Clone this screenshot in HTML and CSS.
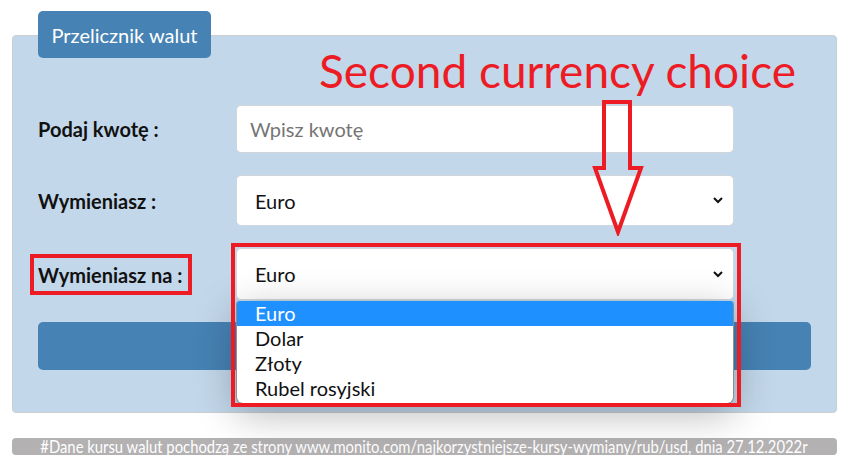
FILE: index.html
```html
<!DOCTYPE html>
<html lang="pl">
<head>
<meta charset="utf-8">
<title>Przelicznik walut</title>
<link rel="stylesheet" href="styles.css">
</head>
<body>
<div class="page">
  <div class="tab">Przelicznik walut</div>
  <div class="card">
    <div class="annotation">Second currency choice</div>
    <svg class="arrow" width="54" height="136" viewBox="0 0 54 136">
      <path d="M13 2 H39 V68 H50 L27 132 L4 68 H13 Z" fill="none" stroke="#ed1c24" stroke-width="4" stroke-linejoin="miter"/>
    </svg>
    <div class="row">
      <div class="label">Podaj kwotę :</div>
      <div class="field input"><span class="placeholder">Wpisz kwotę</span></div>
    </div>
    <div class="row">
      <div class="label">Wymieniasz :</div>
      <div class="field select"><span>Euro</span><svg class="chev" width="10" height="7" viewBox="0 0 10 7"><path d="M1 1 L5 5 L9 1" fill="none" stroke="#111" stroke-width="2"/></svg></div>
    </div>
    <div class="row">
      <div class="label"><span class="mark-label">Wymieniasz na :</span></div>
      <div class="field select select2">
        <span>Euro</span><svg class="chev" width="10" height="7" viewBox="0 0 10 7"><path d="M1 1 L5 5 L9 1" fill="none" stroke="#111" stroke-width="2"/></svg>
        <div class="mark-select"></div>
        <ul class="dropdown">
          <li class="active">Euro</li>
          <li>Dolar</li>
          <li>Złoty</li>
          <li>Rubel rosyjski</li>
        </ul>
      </div>
    </div>
    <div class="button"></div>
  </div>
  <div class="footer"><span>#Dane kursu walut pochodzą ze strony www.monito.com/najkorzystniejsze-kursy-wymiany/rub/usd, dnia 27.12.2022r</span></div>
</div>
</body>
</html>
```
FILE: styles.css
```css
* { box-sizing: border-box; }
html, body { margin: 0; background: #fff; }
body { font-family: Lato, "Open Sans", sans-serif; color: #111; }

.page {
  width: 852px;
  padding: 11px 0 0 12px;
}

.tab {
  position: relative;
  z-index: 2;
  margin-left: 26px;
  width: 173px;
  height: 47px;
  margin-bottom: -23px;
  background: #4682b4;
  border-radius: 5px;
  color: #fff;
  font-size: 20px;
  display: flex;
  align-items: center;
  justify-content: center;
}

.card {
  position: relative;
  width: 825px;
  height: 378px;
  background: #c2d7ea;
  border: 1px solid #c9ced3;
  border-radius: 4px;
  padding: 69px 25px 0 25px;
  display: flex;
  flex-direction: column;
  gap: 22px;
}

.annotation {
  position: absolute;
  left: 306px;
  top: 8px;
  color: #ed1c24;
  font-size: 46px;
  font-family: Lato, sans-serif;
  line-height: 54px;
  white-space: nowrap;
}

.arrow {
  position: absolute;
  left: 578px;
  top: 64px;
  z-index: 3;
}

.row {
  display: flex;
  align-items: center;
}

.label {
  width: 198px;
  font-weight: bold;
  font-size: 20px;
}

.field {
  width: 498px;
  background: #fff;
  border: 1px solid #d2d6da;
  border-radius: 5px;
  font-size: 20px;
  display: flex;
  align-items: center;
}

.input {
  height: 48px;
  padding-left: 13px;
}
.placeholder { color: #757575; }

.select {
  height: 51px;
  padding: 0 10px 0 18px;
  justify-content: space-between;
}

.select2 {
  position: relative;
  height: 52px;
}

.chev { display: block; }

.mark-label {
  display: inline-block;
  margin-left: -8px;
  padding: 5px 5px 4px 4px;
  border: 4px solid #ed1c24;
}

.mark-select {
  position: absolute;
  left: -6px;
  top: -6px;
  width: 510px;
  height: 164px;
  border: 4px solid #ed1c24;
  z-index: 4;
  pointer-events: none;
}

.dropdown {
  position: absolute;
  left: -1px;
  top: 52px;
  width: 498px;
  margin: 0;
  padding: 0 0 2px 0;
  list-style: none;
  background: #fff;
  border: 1px solid #8f8f8f;
  border-top: none;
  border-radius: 3px 3px 7px 7px;
  box-shadow: 0 10px 40px rgba(0, 0, 0, 0.28);
  z-index: 3;
  overflow: hidden;
}

.dropdown li {
  height: 25px;
  line-height: 25px;
  padding-left: 18px;
  font-size: 20px;
  color: #111;
}

.dropdown li.active {
  background: #1e90ff;
  color: #fff;
}

.button {
  width: 773px;
  height: 48px;
  background: #4682b4;
  border-radius: 5px;
}

.footer {
  margin-top: 25px;
  width: 825px;
  height: 17px;
  background: #b3b1b2;
  border-radius: 4px;
  color: #fff;
  font-size: 17px;
  line-height: 17px;
  white-space: nowrap;
  display: flex;
  justify-content: center;
}

.footer span {
  display: block;
  flex: none;
  transform: translateX(-1px) scaleX(0.872);
  transform-origin: center;
}
```
